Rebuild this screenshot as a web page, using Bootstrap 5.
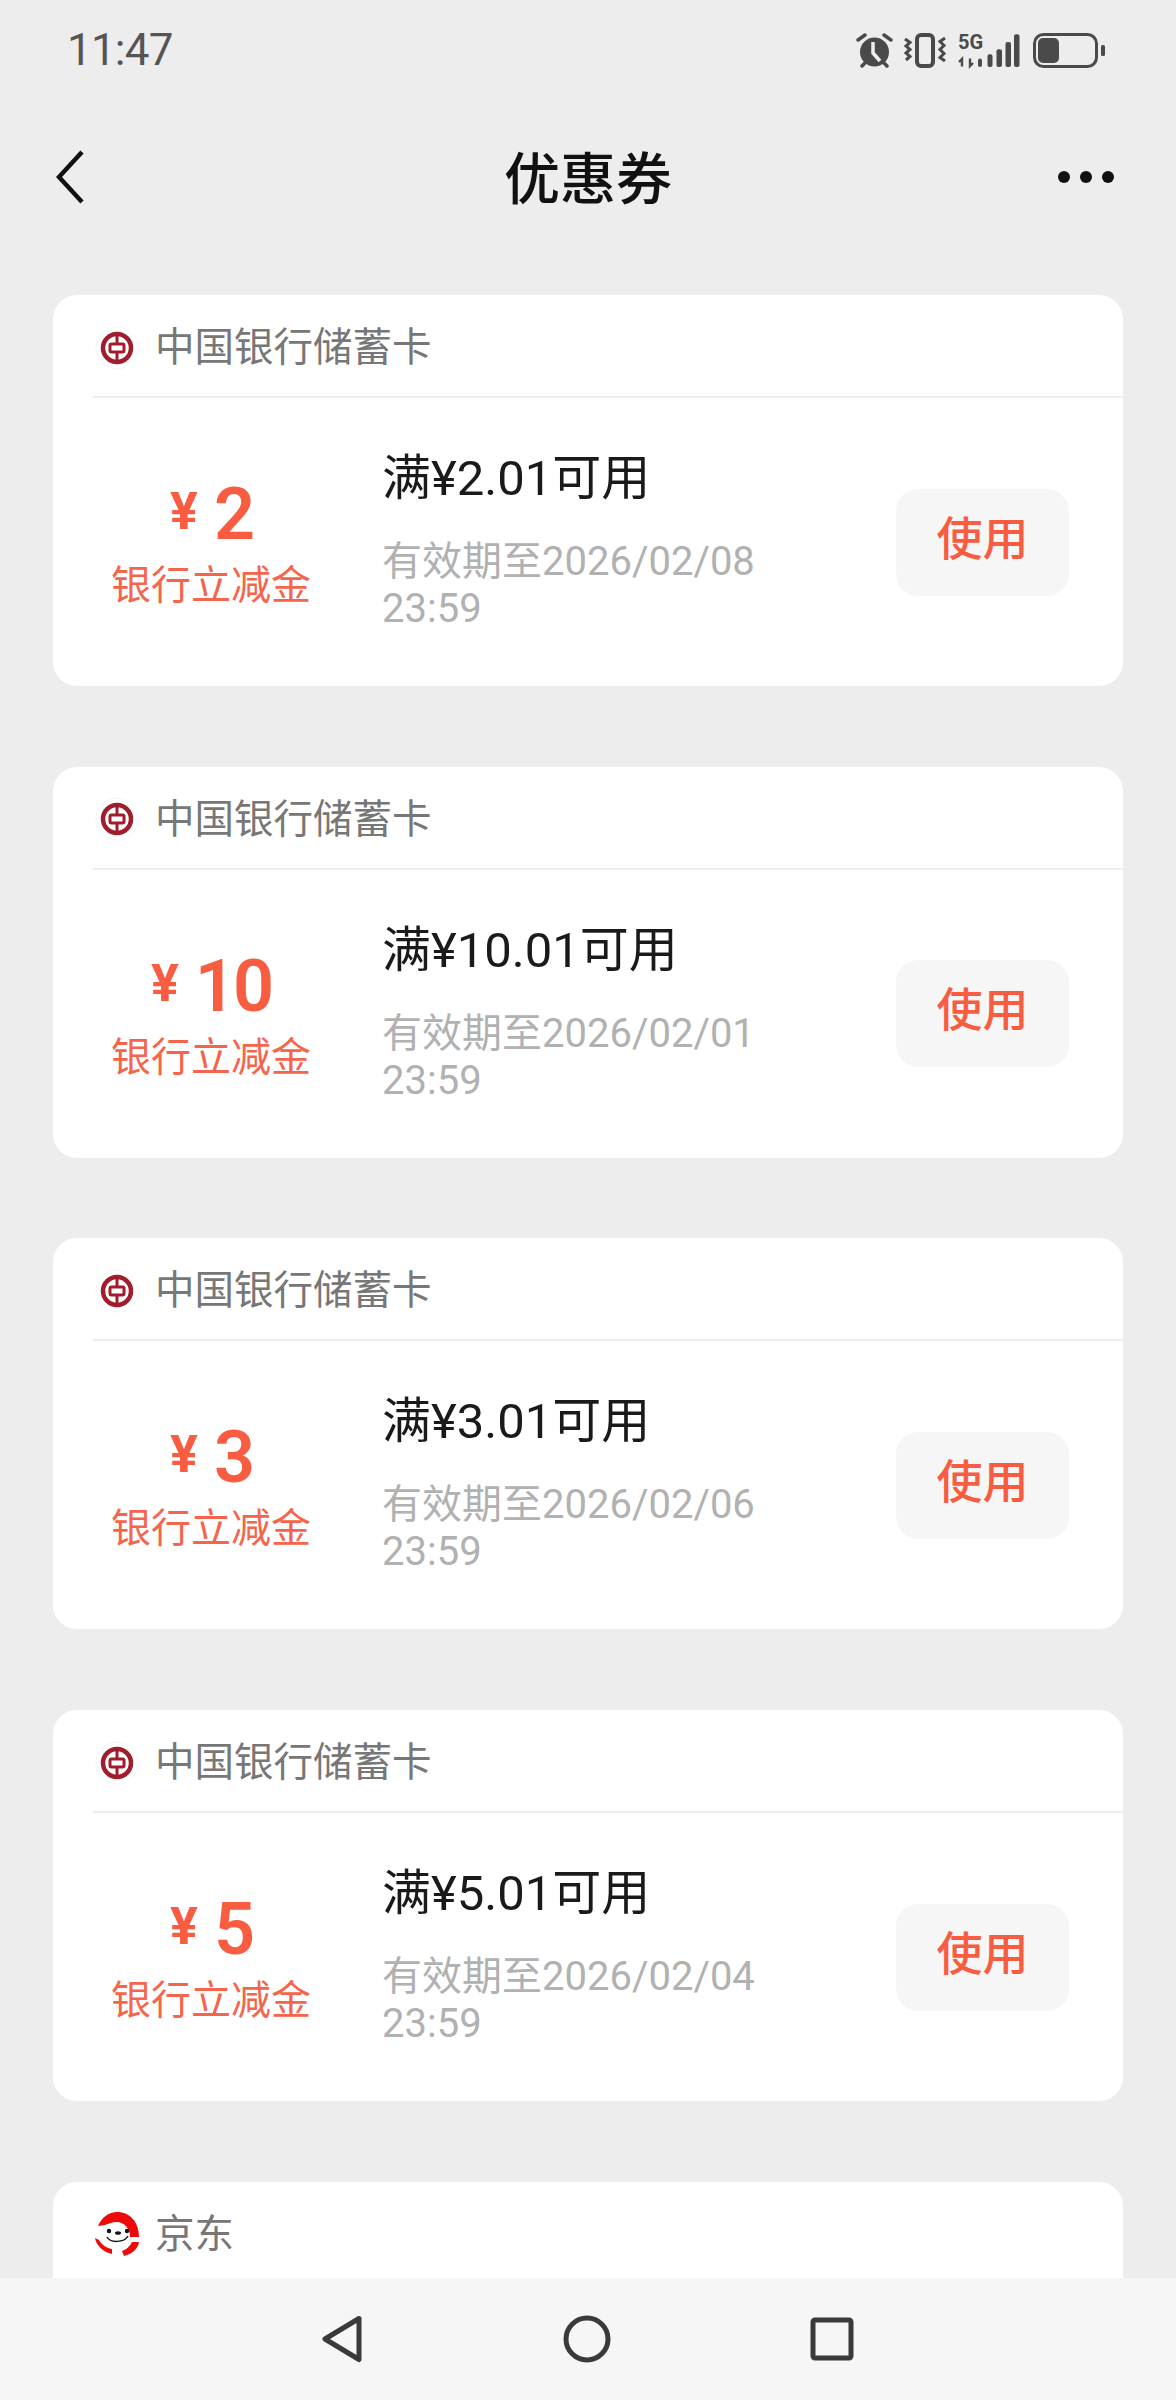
<!DOCTYPE html>
<html lang="zh-CN">
<head>
    <meta charset="UTF-8">
    <meta name="viewport" content="width=device-width, initial-scale=1.0">
    <title>优惠券</title>
    <link rel="stylesheet" href="https://cdn.jsdelivr.net/npm/bootstrap@5.3.0/dist/css/bootstrap.min.css">
    <style>
        body { background: #ededed; font-family: Roboto, "Noto Sans CJK SC", sans-serif; }
        .phone { width: 1176px; height: 2400px; overflow: hidden; position: relative; background: #ededed; }
        .status-row { height: 100px; padding: 0 71px 0 67px; color: #555; }
        .clock { font-size: 44px; line-height: 1; letter-spacing: -0.8px; font-weight: 400; }
        .status-icons { gap: 10px; }
        .batt-icon { margin-left: 3px; }
        .title-row { height: 154px; padding: 0 62px 0 56px; position: relative; }
        .page-title { font-size: 56px; font-weight: 500; line-height: 1; color: #111; position: absolute; left: 0; right: 0; top: 52px; text-align: center; margin: 0; }
        .more-dots { gap: 10px; }
        .coupon-list { padding: 41px 53px 0; }
        .coupon { height: 391px; margin-bottom: 80.7px; border: 0; border-radius: 24px; background: #fff; }
        .coupon-head { height: 103px; margin-left: 40px; border-bottom: 2px solid #eee; color: #777; font-size: 39.5px; gap: 16px; }
        .coupon-head svg { margin-left: 2px; margin-top: 4px; }
        .coupon-head span { margin-top: 4px; }
        .coupon-body { height: 288px; padding-right: 55px; }
        .amount-col { width: 316px; color: #f85c41; text-align: center; }
        .amount { font-size: 72px; font-weight: 600; line-height: 84px; letter-spacing: -3px; margin-top: -1px; margin-bottom: -2px; }
        .yen { font-size: 52px; font-weight: 700; position: relative; top: -10px; margin-right: 16px; letter-spacing: 0; }
        .amount-note { font-size: 40px; line-height: 48px; color: #f4654c; }
        .rule-col { flex: 1; padding: 0 100px 0 13px; min-width: 0; }
        .rule { font-size: 49px; line-height: 60px; color: #1a1a1a; margin-bottom: 29px; margin-top: -3px; }
        .expire { font-size: 40px; line-height: 47px; color: #b1b1b1; }
        .use-btn { width: 173px; height: 107px; flex: none; border: 0; border-radius: 22px; background: #f6f6f6; color: #f85c41; font-size: 46px; font-weight: 500; padding: 0 0 6px; margin-right: -1px; }
        .use-btn:hover { background: #f6f6f6; color: #f85c41; }
        .sys-nav { position: absolute; left: 0; right: 0; bottom: 0; height: 122px; background: #f6f6f6; padding: 0 322px; }
    </style>
</head>
<body>
<div class="phone">
    <!-- status bar -->
    <div class="status-row d-flex align-items-center justify-content-between">
        <span class="clock">11:47</span>
        <div class="status-icons d-flex align-items-center">
            <svg width="37" height="35" viewBox="0 0 37 35">
                <circle cx="18.500" cy="19" r="14.500" fill="#4a4a4a"/>
                <path d="M17 9v11l7 8" fill="none" stroke="#ededed" stroke-width="3.500"/>
                <path d="M2 7 9 2M35 7 28 2M6 33l4-4M31 33l-4-4" stroke="#4a4a4a" stroke-width="3.500" stroke-linecap="round"/>
            </svg>
            <svg width="45" height="35" viewBox="0 0 45 35">
                <rect x="14" y="2" width="16" height="31" rx="4" fill="none" stroke="#4a4a4a" stroke-width="4"/>
                <path d="M2 6l5 3.500-4 3.500 4 3.500-4 3.500 4 3.500-4 3.500M42 5l-5 3.500 4 4-4 4 4 4-4 4 5 3.500" fill="none" stroke="#4a4a4a" stroke-width="3"/>
            </svg>
            <svg width="62" height="45" viewBox="0 -5 62 45">
                <text x="0" y="16" font-family="Roboto" font-weight="700" font-size="20" fill="#4a4a4a">5G</text>
                <path d="M4 33.500V26l-3 3M12 25.500V33l3-3" fill="none" stroke="#4a4a4a" stroke-width="2.400"/>
                <rect x="20" y="25.500" width="4" height="8.500" rx="2" fill="#4a4a4a"/>
                <rect x="29.500" y="21.300" width="5" height="12.700" rx="2" fill="#4a4a4a"/>
                <rect x="38.500" y="16.300" width="5.500" height="17.700" rx="2" fill="#4a4a4a"/>
                <rect x="47.500" y="9" width="5.500" height="25" rx="2" fill="#4a4a4a"/>
                <rect x="56" y="1.300" width="5.500" height="32.700" rx="2" fill="#4a4a4a"/>
            </svg>
            <svg class="batt-icon" width="72" height="35" viewBox="0 0 72 35">
                <rect x="1.500" y="1.500" width="62" height="32" rx="9" fill="none" stroke="#4a4a4a" stroke-width="3"/>
                <rect x="5" y="5" width="21" height="25" rx="5" fill="#4a4a4a"/>
                <rect x="68" y="12" width="4" height="11" rx="1.500" fill="#4a4a4a"/>
            </svg>
        </div>
    </div>

    <!-- title bar -->
    <div class="title-row d-flex align-items-center justify-content-between">
        <svg width="28" height="54" viewBox="0 0 28 54"><path d="M26 2 3 27l23 25" fill="none" stroke="#111" stroke-width="4.500"/></svg>
        <h1 class="page-title">优惠券</h1>
        <div class="more-dots d-flex align-items-center">
            <svg width="12" height="12"><circle cx="6" cy="6" r="6" fill="#111"/></svg>
            <svg width="12" height="12"><circle cx="6" cy="6" r="6" fill="#111"/></svg>
            <svg width="12" height="12"><circle cx="6" cy="6" r="6" fill="#111"/></svg>
        </div>
    </div>

    <div class="coupon-list">
        <!-- coupons -->
        <div class="card coupon">
            <div class="coupon-head d-flex align-items-center">
                <svg width="44" height="44" viewBox="0 0 44 44"><circle cx="22" cy="22" r="21" fill="#fff" stroke="#f6f6f6"/><circle cx="22" cy="22" r="14" fill="none" stroke="#a11d2b" stroke-width="4.500"/><rect x="15" y="18" width="14" height="8" rx="1.500" fill="none" stroke="#a11d2b" stroke-width="3"/><path d="M22 8v10M22 26v10" stroke="#a11d2b" stroke-width="3"/></svg>
                <span>中国银行储蓄卡</span>
            </div>
            <div class="coupon-body d-flex align-items-center">
                <div class="amount-col">
                    <div class="amount"><span class="yen">¥</span>2</div>
                    <div class="amount-note">银行立减金</div>
                </div>
                <div class="rule-col">
                    <div class="rule">满¥2.01可用</div>
                    <div class="expire">有效期至2026/02/08 23:59</div>
                </div>
                <button class="btn use-btn">使用</button>
            </div>
        </div>

        <div class="card coupon">
            <div class="coupon-head d-flex align-items-center">
                <svg width="44" height="44" viewBox="0 0 44 44"><circle cx="22" cy="22" r="21" fill="#fff" stroke="#f6f6f6"/><circle cx="22" cy="22" r="14" fill="none" stroke="#a11d2b" stroke-width="4.500"/><rect x="15" y="18" width="14" height="8" rx="1.500" fill="none" stroke="#a11d2b" stroke-width="3"/><path d="M22 8v10M22 26v10" stroke="#a11d2b" stroke-width="3"/></svg>
                <span>中国银行储蓄卡</span>
            </div>
            <div class="coupon-body d-flex align-items-center">
                <div class="amount-col">
                    <div class="amount"><span class="yen">¥</span>10</div>
                    <div class="amount-note">银行立减金</div>
                </div>
                <div class="rule-col">
                    <div class="rule">满¥10.01可用</div>
                    <div class="expire">有效期至2026/02/01 23:59</div>
                </div>
                <button class="btn use-btn">使用</button>
            </div>
        </div>

        <div class="card coupon">
            <div class="coupon-head d-flex align-items-center">
                <svg width="44" height="44" viewBox="0 0 44 44"><circle cx="22" cy="22" r="21" fill="#fff" stroke="#f6f6f6"/><circle cx="22" cy="22" r="14" fill="none" stroke="#a11d2b" stroke-width="4.500"/><rect x="15" y="18" width="14" height="8" rx="1.500" fill="none" stroke="#a11d2b" stroke-width="3"/><path d="M22 8v10M22 26v10" stroke="#a11d2b" stroke-width="3"/></svg>
                <span>中国银行储蓄卡</span>
            </div>
            <div class="coupon-body d-flex align-items-center">
                <div class="amount-col">
                    <div class="amount"><span class="yen">¥</span>3</div>
                    <div class="amount-note">银行立减金</div>
                </div>
                <div class="rule-col">
                    <div class="rule">满¥3.01可用</div>
                    <div class="expire">有效期至2026/02/06 23:59</div>
                </div>
                <button class="btn use-btn">使用</button>
            </div>
        </div>

        <div class="card coupon">
            <div class="coupon-head d-flex align-items-center">
                <svg width="44" height="44" viewBox="0 0 44 44"><circle cx="22" cy="22" r="21" fill="#fff" stroke="#f6f6f6"/><circle cx="22" cy="22" r="14" fill="none" stroke="#a11d2b" stroke-width="4.500"/><rect x="15" y="18" width="14" height="8" rx="1.500" fill="none" stroke="#a11d2b" stroke-width="3"/><path d="M22 8v10M22 26v10" stroke="#a11d2b" stroke-width="3"/></svg>
                <span>中国银行储蓄卡</span>
            </div>
            <div class="coupon-body d-flex align-items-center">
                <div class="amount-col">
                    <div class="amount"><span class="yen">¥</span>5</div>
                    <div class="amount-note">银行立减金</div>
                </div>
                <div class="rule-col">
                    <div class="rule">满¥5.01可用</div>
                    <div class="expire">有效期至2026/02/04 23:59</div>
                </div>
                <button class="btn use-btn">使用</button>
            </div>
        </div>

        <div class="card coupon">
            <div class="coupon-head d-flex align-items-center">
                <svg width="44" height="44" viewBox="0 0 44 44">
                    <path d="M3 14C7 5 14 0 22 0c13 0 22 10 22 25H35c0-5-1-6-2-8-3-5-7-7-11-7-5 0-9 2-12 3z" fill="#ee0a0a"/>
                    <path d="M0 26c1 7 8 14 17 16v-5C11 36 6 32 4 28z" fill="#ee0a0a"/>
                    <path d="M29 44c8-2 14-7 15-14h-7c-2 4-6 8-10 9z" fill="#ee0a0a"/>
                    <circle cx="14" cy="19" r="2.200" fill="#111"/><circle cx="32" cy="19" r="2.200" fill="#111"/>
                    <ellipse cx="23" cy="21" rx="3" ry="1.800" fill="#111"/>
                    <path d="M12 25c3 6 17 6 21-1" fill="none" stroke="#111" stroke-width="1.500"/>
                </svg>
                <span>京东</span>
            </div>
        </div>
    </div>

    <!-- android nav -->
    <div class="sys-nav d-flex align-items-center justify-content-between">
        <svg width="42" height="48" viewBox="0 0 42 48"><path d="M37 3.500 3 24l34 20.500z" fill="none" stroke="#3a3a3a" stroke-width="5" stroke-linejoin="round"/></svg>
        <svg width="48" height="48" viewBox="0 0 48 48"><circle cx="24" cy="24" r="21" fill="none" stroke="#3a3a3a" stroke-width="5"/></svg>
        <svg width="44" height="44" viewBox="0 0 44 44"><rect x="3" y="3" width="38" height="38" rx="2" fill="none" stroke="#3a3a3a" stroke-width="5"/></svg>
    </div>
</div>
<script src="https://cdn.jsdelivr.net/npm/bootstrap@5.3.0/dist/js/bootstrap.bundle.min.js"></script>
</body>
</html>
